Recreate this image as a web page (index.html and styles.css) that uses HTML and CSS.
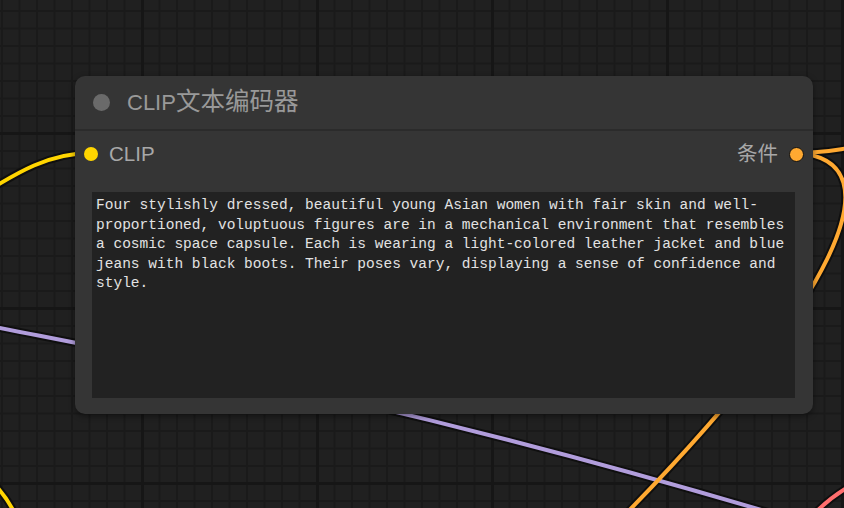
FILE: index.html
```html
<!DOCTYPE html>
<html lang="zh">
<head>
<meta charset="utf-8">
<title>CLIP文本编码器</title>
<link rel="stylesheet" href="styles.css">
</head>
<body>
<div class="canvas">
  <svg class="wires" viewBox="0 0 844 508" width="844" height="508">
    <g class="wire-shadow">
      <path d="M -30 202 C 20 170, 50 153, 92 153"/>
      <path d="M -6 484 C 2 492, 8 500, 14 512"/>
      <path d="M -20 324 C 150 358, 400 402, 785 517"/>
      <path d="M 797 153 C 900 160, 840 300, 600 540"/>
      <path d="M 797 153 C 820 153, 835 150, 850 148"/>
      <path d="M 816 512 C 826 502, 836 494, 850 486"/>
    </g>
    <path class="wire yellow" d="M -30 202 C 20 170, 50 153, 92 153"/>
    <path class="wire yellow" d="M -6 484 C 2 492, 8 500, 14 512"/>
    <path class="wire purple" d="M -20 324 C 150 358, 400 402, 785 517"/>
    <path class="wire orange" d="M 797 153 C 900 160, 840 300, 600 540"/>
    <path class="wire orange" d="M 797 153 C 820 153, 835 150, 850 148"/>
    <path class="wire red" d="M 816 512 C 826 502, 836 494, 850 486"/>
  </svg>

  <div class="node">
    <div class="node-title">
      <span class="title-dot"></span>
      <span class="title-text">CLIP<span class="title-cjk">文本编码器</span></span>
    </div>
    <div class="node-body">
      <div class="slots">
        <div class="slot slot-in">
          <span class="slot-dot dot-clip"></span>
          <span class="slot-label">CLIP</span>
        </div>
        <div class="slot slot-out">
          <span class="slot-label">条件</span>
          <span class="slot-dot dot-cond"></span>
        </div>
      </div>
      <div class="prompt">Four stylishly dressed, beautiful young Asian women with fair skin and well-<br>proportioned, voluptuous figures are in a mechanical environment that resembles<br>a cosmic space capsule. Each is wearing a light-colored leather jacket and blue<br>jeans with black boots. Their poses vary, displaying a sense of confidence and<br>style.</div>
    </div>
  </div>
</div>
</body>
</html>
```

FILE: styles.css
```css
html, body {
  margin: 0;
  padding: 0;
  width: 844px;
  height: 508px;
  overflow: hidden;
  background: #202020;
}

.canvas {
  position: relative;
  width: 844px;
  height: 508px;
  background-color: #202020;
  background-image:
    linear-gradient(to right, #161616 0, #161616 3px, transparent 3px),
    linear-gradient(to bottom, #161616 0, #161616 3px, transparent 3px),
    linear-gradient(to right, #1a1a1a 0, #1a1a1a 2px, transparent 2px),
    linear-gradient(to bottom, #1a1a1a 0, #1a1a1a 2px, transparent 2px);
  background-size: 175px 175px, 175px 175px, 17.5px 17.5px, 17.5px 17.5px;
  background-position: 141px 132px, 141px 132px, 1px 10px, 1px 10px;
  font-family: "Liberation Sans", "Noto Sans CJK SC", sans-serif;
}

.wires {
  position: absolute;
  left: 0;
  top: 0;
}

.wire-shadow path {
  fill: none;
  stroke: #0d0d0d;
  stroke-width: 8;
  stroke-linecap: round;
  opacity: 0.9;
}

.wire {
  fill: none;
  stroke-width: 4;
  stroke-linecap: round;
}
.yellow { stroke: #ffd500; }
.purple { stroke: #b19ddc; }
.orange { stroke: #ffa931; }
.red { stroke: #ff6e6e; }

.node {
  position: absolute;
  left: 75px;
  top: 76px;
  width: 738px;
  height: 338px;
  background: #353535;
  border-radius: 10px;
  box-shadow: 0 2px 6px rgba(0, 0, 0, 0.45);
  display: flex;
  flex-direction: column;
}

.node-title {
  height: 53px;
  border-bottom: 2px solid #2b2b2b;
  display: flex;
  align-items: center;
  padding-left: 17px;
  gap: 18px;
}

.title-dot {
  width: 17px;
  height: 17px;
  border-radius: 50%;
  background: #6a6a6a;
  margin-left: 1px;
}

.title-text {
  color: #999999;
  font-size: 22px;
  line-height: 1;
  margin-top: -1px;
  margin-left: -1px;
}

.title-cjk {
  font-size: 24.5px;
}

.node-body {
  flex: 1;
  display: flex;
  flex-direction: column;
  padding: 0 18px 16px 17px;
}

.slots {
  height: 46px;
  display: flex;
  justify-content: space-between;
  align-items: center;
}

.slot {
  display: flex;
  align-items: center;
}

.slot-in {
  margin-left: -8px;
  gap: 11px;
}

.slot-out {
  margin-right: -9px;
  gap: 11px;
}

.slot-label {
  color: #a8a8a8;
  font-size: 20.5px;
  line-height: 1;
}

.slot-dot {
  width: 14px;
  height: 14px;
  border-radius: 50%;
  box-sizing: border-box;
}

.dot-clip {
  background: #ffd500;
}

.dot-cond {
  background: #ffa931;
  border: 1.5px solid #111111;
  width: 15px;
  height: 15px;
}

.prompt {
  margin-top: 15px;
  flex: 1;
  background: #222222;
  color: #e2e2e2;
  font-family: "Liberation Mono", "DejaVu Sans Mono", monospace;
  font-size: 14.53px;
  line-height: 19.5px;
  padding: 4px 4px;
  white-space: nowrap;
  overflow: hidden;
}
```
